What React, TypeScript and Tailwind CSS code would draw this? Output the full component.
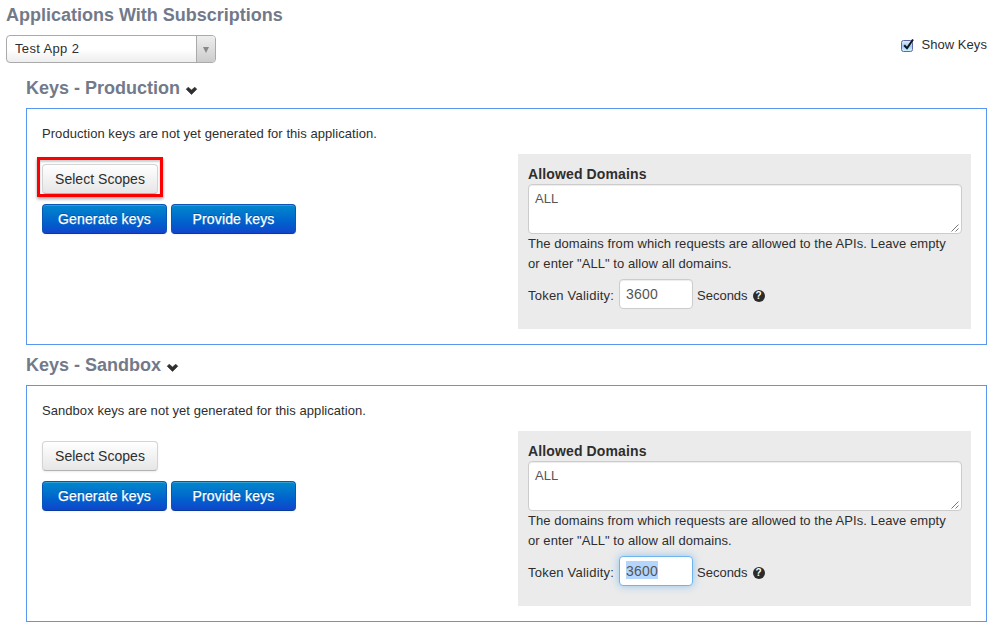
function Chevron() {
  return (
    <svg className="ml-[5px] mt-[5px] h-[9px] w-[13px]" viewBox="0 0 13 9">
      <path d="M1.2 3.2 L3.2 1.2 L6.5 4 L9.8 1.2 L11.8 3.2 L6.5 8.4 Z" fill="#2f2f2f" stroke="#2f2f2f" strokeWidth="0.6" strokeLinejoin="round" />
    </svg>
  );
}

function Help() {
  return (
    <span className="ml-[5px] flex h-3 w-3 items-center justify-center rounded-full bg-[#2b2b2b] text-[10px] font-bold leading-3 text-white">?</span>
  );
}

function Grip() {
  return (
    <svg className="absolute bottom-px right-[2px] h-2 w-2" viewBox="0 0 8 8" stroke="#555" strokeWidth="0.8">
      <path d="M0.5 7.5 L7.5 0.5 M4.5 7.5 L7.5 4.5" />
    </svg>
  );
}

function BlueButton({ label }: { label: string }) {
  return (
    <button className="h-[30px] w-[125px] whitespace-nowrap rounded-[4px] border border-[#0b55b5] border-b-[#0a3a9c] bg-gradient-to-b from-[#0088cc] to-[#1144cc] text-[14px] leading-5 tracking-[0.15px] text-white shadow-[inset_0_1px_0_rgba(255,255,255,0.2),0_1px_2px_rgba(0,0,0,0.05)] [-webkit-text-stroke:0.25px_white] [text-shadow:0_-1px_0_rgba(0,0,0,0.25)]">
      {label}
    </button>
  );
}

type PanelProps = { name: string; highlighted?: boolean; focused?: boolean };

function KeysPanel({ name, highlighted, focused }: PanelProps) {
  return (
    <section className="h-[277px] pl-[26px]">
      <h2 className="flex h-[40px] items-center text-[18px] font-bold leading-10 text-[#727a8a]">
        <span>Keys - {name}</span>
        <Chevron />
      </h2>
      <div className="flex h-[237px] w-[961px] justify-between border border-[#5896f0] pr-[15px]">
        <div className="pl-[15px]">
          <p className="mt-[15px] h-5 whitespace-nowrap leading-5 tracking-[0.055px]">{name} keys are not yet generated for this application.</p>
          <div className="relative mt-5 h-[30px] w-[116px]">
            <button className="h-[30px] w-[116px] whitespace-nowrap rounded-[4px] border border-[#d4d4d4] border-b-[#b3b3b3] bg-gradient-to-b from-white to-[#e6e6e6] text-[14px] leading-5 tracking-[0.03px] shadow-[0_1px_2px_rgba(0,0,0,0.08)]">
              Select Scopes
            </button>
            {highlighted && (
              <div className="absolute -left-[5px] -top-[7px] h-10 w-[126px] border-[3px] border-[#fa0000] shadow-[0_2px_3px_rgba(0,0,0,0.35),inset_0_2px_2px_rgba(0,0,0,0.2)]" />
            )}
          </div>
          <div className="mt-[10px] flex gap-1">
            <BlueButton label="Generate keys" />
            <BlueButton label="Provide keys" />
          </div>
        </div>
        <div className="mt-[45px] h-[175px] w-[453px] bg-[#ebebeb] pl-[10px] pt-[10px]">
          <div className="h-5 text-[14px] font-bold leading-5 tracking-[0.13px]">Allowed Domains</div>
          <div className="relative h-[50px] w-[434px] rounded-[4px] border border-[#ccc] bg-white px-[6px] pt-1 leading-5 text-[#555] shadow-[inset_0_1px_1px_rgba(0,0,0,0.075)]">
            ALL
            <Grip />
          </div>
          <p className="whitespace-nowrap leading-5 tracking-[0.065px]">
            The domains from which requests are allowed to the APIs. Leave empty
            <br />
            or enter "ALL" to allow all domains.
          </p>
          <div className="mt-[5px] flex h-[30px] items-center">
            <span className="w-[91px] whitespace-nowrap pt-[3px] tracking-[0.22px]">Token Validity:</span>
            <div
              className={
                focused
                  ? "h-[30px] w-[74px] rounded-[4px] border border-[#6eb5ef] bg-white pl-[6px] pt-1 text-[14px] leading-5 text-[#555] shadow-[0_0_8px_rgba(82,168,236,0.6)]"
                  : "h-[30px] w-[74px] rounded-[4px] border border-[#ccc] bg-white pl-[6px] pt-1 text-[14px] leading-5 text-[#555] shadow-[inset_0_1px_1px_rgba(0,0,0,0.075)]"
              }
            >
              <span className={focused ? "inline-block h-[18px] bg-[#b4d5fe] leading-5 tracking-[0.2px]" : "inline-block h-[18px] leading-5 tracking-[0.2px]"}>3600</span>
            </div>
            <span className="ml-1 pt-[3px]">Seconds</span>
            <span className="pt-[3px]"><Help /></span>
          </div>
        </div>
      </div>
    </section>
  );
}

export default function App() {
  return (
    <main className="h-[627px] w-[993px] overflow-hidden bg-white font-['Liberation_Sans',Arial,sans-serif] text-[13px] text-[#2e2e2e]">
      <h1 className="h-[35px] pl-[6px] text-[18px] font-bold leading-[30px] text-[#727a8a]">Applications With Subscriptions</h1>
      <div className="flex h-[33px] justify-between pl-[6px] pr-[6px]">
        <div className="flex h-7 w-[210px] overflow-hidden rounded-[4px] border border-[#aaa] bg-gradient-to-b from-white from-50% to-[#eee]">
          <span className="flex-1 pl-2 leading-[26px] tracking-[0.35px]">Test App 2</span>
          <span className="flex w-[19px] items-center justify-center border-l border-[#aaa] bg-gradient-to-b from-[#eee] to-[#ccc]">
            <svg className="mt-[2px] h-[6px] w-[6px]" viewBox="0 0 6 6"><path d="M0 0H6L3 6Z" fill="#888" /></svg>
          </span>
        </div>
        <label className="flex h-5 items-center whitespace-nowrap tracking-[0.06px]">
          <svg className="mr-[6px] h-[15px] w-[14px]" viewBox="0 0 14 15">
            <defs>
              <linearGradient id="check-fill" x2="0" y2="1"><stop stopColor="#e4f1fb" /><stop offset=".5" stopColor="#9fcdf1" /><stop offset="1" stopColor="#d3f6ff" /></linearGradient>
            </defs>
            <rect x="0.5" y="2.5" width="11" height="11" rx="2" fill="url(#check-fill)" stroke="#6068a6" />
            <path d="M3.2 7.2L6 10.2L12 1.5" fill="none" stroke="#10151f" strokeWidth="2" />
          </svg>
          Show Keys
        </label>
      </div>
      <KeysPanel name="Production" highlighted />
      <KeysPanel name="Sandbox" focused />
    </main>
  );
}
